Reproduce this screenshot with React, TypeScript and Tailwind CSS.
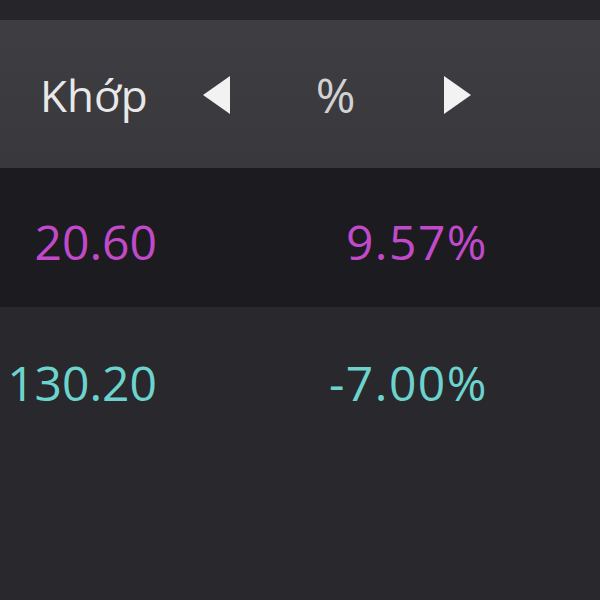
const rows = [
  { price: "20.60", change: "9.57%", color: "text-[#c04ac9]", bg: "bg-[#1c1b1f]", pt: "pt-[50px]", h: "h-[139px]" },
  { price: "130.20", change: "-7.00%", color: "text-[#6cd4cd]", bg: "bg-[#29282d]", pt: "pt-[52px]", h: "flex-1" },
];

function Arrow({ dir }: { dir: "left" | "right" }) {
  return (
    <svg width="27" height="42" viewBox="0 0 27 42" className="shrink-0">
      <polygon
        points={dir === "left" ? "27,2 0,21 27,40" : "0,2 27,21 0,40"}
        fill="#f2f2f2"
      />
    </svg>
  );
}

export default function App() {
  return (
    <div
      className="flex h-[600px] w-[600px] flex-col overflow-hidden bg-[#29282d]"
      style={{ fontFamily: '"Open Sans", "Noto Sans", sans-serif' }}
    >
      <div className="h-[20px] bg-[#26252a]" />

      <div className="h-[148px] bg-gradient-to-b from-[#3e3d42] to-[#39383d]">
        <div className="flex items-start pl-[40px] pt-[53px]">
          <span className="text-[44px] leading-none text-[#e8e8e8]">Khớp</span>
          <div className="ml-[55px] mt-[1px]">
            <Arrow dir="left" />
          </div>
          <span className="ml-[86px] mt-[-2px] text-[48px] leading-none text-[#d2d2d2]">%</span>
          <div className="ml-[89px] mt-[1px]">
            <Arrow dir="right" />
          </div>
        </div>
      </div>

      {rows.map((r) => (
        <div key={r.price} className={`${r.h} ${r.bg} ${r.pt}`}>
          <div className={`flex text-[48px] leading-none ${r.color}`}>
            <span className="w-[157px] text-right">{r.price}</span>
            <span className="w-[331px] text-right tracking-[1.5px]">{r.change}</span>
          </div>
        </div>
      ))}
    </div>
  );
}
